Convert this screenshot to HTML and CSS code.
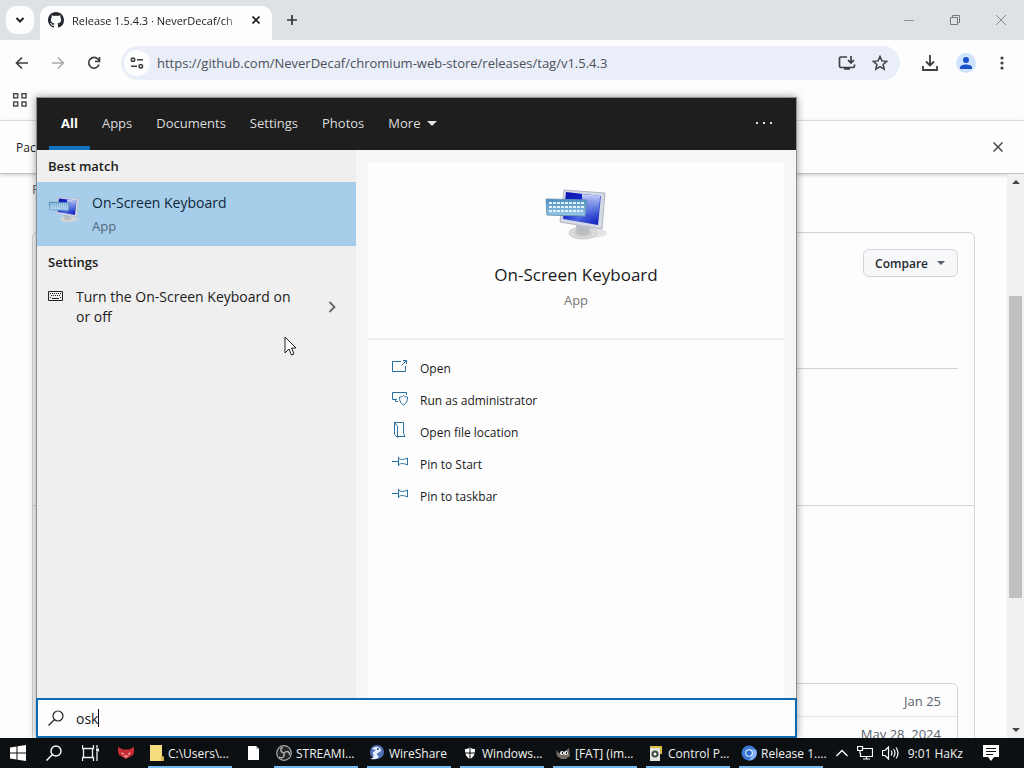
FILE: index.html
```
<!DOCTYPE html>
<html lang="en">
<head>
    <meta charset="UTF-8">
    <meta name="viewport" content="width=device-width, initial-scale=1.0">
    <title>Release 1.5.4.3</title>
    <link rel="stylesheet" href="styles.css">
</head>
<body>
    <svg class="defs" aria-hidden="true">
        <defs>
            <linearGradient id="screenFill" x1="0" y1="0" x2="1" y2="1">
                <stop offset="0" stop-color="#0a14a8"/>
                <stop offset="0.35" stop-color="#1424c8"/>
                <stop offset="0.6" stop-color="#4a66e0"/>
                <stop offset="1" stop-color="#0818b4"/>
            </linearGradient>
            <linearGradient id="glareFill" x1="0" y1="0" x2="0" y2="1">
                <stop offset="0" stop-color="#d4dcfa"/>
                <stop offset="1" stop-color="#4a62dc" stop-opacity="0.2"/>
            </linearGradient>
            <linearGradient id="keysFill" x1="0" y1="0" x2="0" y2="1">
                <stop offset="0" stop-color="#4a8fc0"/>
                <stop offset="1" stop-color="#9cc8e8"/>
            </linearGradient>
            <radialGradient id="standFill">
                <stop offset="0" stop-color="#aeb0b0"/>
                <stop offset="1" stop-color="#e6e6e4"/>
            </radialGradient>
        </defs>
        <symbol id="oskIcon" viewBox="0 0 64 52">
            <ellipse cx="47" cy="44" rx="16" ry="5" fill="#d5d5d5" opacity="0.6"/>
            <ellipse cx="39" cy="44" rx="14" ry="6" fill="url(#standFill)" stroke="#c4c6c8"/>
            <path d="M32 36l14 3-1 6H33z" fill="#b9bdc2"/>
            <path d="M20 1l41 3-3 36-42-7z" fill="#d5d9e4" stroke="#b0b5c4"/>
            <path d="M22 3l35 4-3 29-35-6z" fill="url(#screenFill)"/>
            <path d="M38 5l18 2-2 22-16-6z" fill="url(#glareFill)"/>
            <path d="M2 10l41 1-2 16-38-1z" fill="url(#keysFill)" stroke="#6495b8"/>
            <path d="M5 14h35M5 18h35M5 22h34" stroke="#e2f3fc" stroke-width="2" stroke-dasharray="3 1"/>
        </symbol>
    </svg>

    <div class="browser">
        <header class="tabstrip">
            <button class="tab-search" aria-label="Search tabs">
                <svg width="10" height="8" viewBox="0 0 10 8"><path d="M1.500 2l3.500 3.500L8.500 2" fill="none" stroke="#202124" stroke-width="2"/></svg>
            </button>
            <div class="tab">
                <svg width="16" height="16" viewBox="0 0 16 16"><path fill="#24292f" d="M8 0C3.580 0 0 3.580 0 8c0 3.540 2.290 6.530 5.470 7.590.4.070.55-.17.55-.38 0-.19-.01-.82-.01-1.490-2.010.37-2.530-.49-2.690-.94-.09-.23-.48-.94-.82-1.130-.28-.15-.68-.52-.01-.53.63-.01 1.080.58 1.230.82.72 1.210 1.870.87 2.330.66.070-.52.28-.87.51-1.070-1.780-.2-3.640-.89-3.640-3.950 0-.87.31-1.590.82-2.150-.08-.2-.36-1.020.08-2.120 0 0 .67-.21 2.200.82.64-.18 1.320-.27 2-.27s1.360.09 2 .27c1.530-1.040 2.200-.82 2.200-.82.44 1.100.16 1.920.08 2.120.51.56.82 1.270.82 2.150 0 3.070-1.870 3.750-3.650 3.950.29.25.54.73.54 1.480 0 1.070-.01 1.930-.01 2.200 0 .21.15.46.55.38A8.010 8.010 0 0 0 16 8c0-4.420-3.580-8-8-8z"/></svg>
                <span class="tab-title">Release 1.5.4.3 · NeverDecaf/ch</span>
                <button class="icon-btn" aria-label="Close tab"><svg width="8" height="8" viewBox="0 0 8 8"><path d="M0.500 0.500l7 7M7.500 0.500l-7 7" stroke="#202124" stroke-width="1.700"/></svg></button>
            </div>
            <button class="icon-btn new-tab" aria-label="New tab"><svg width="12" height="12" viewBox="0 0 12 12"><path d="M6 1v10M1 6h10" stroke="#333" stroke-width="1.700"/></svg></button>
            <div class="window-buttons">
                <button class="icon-btn" aria-label="Minimize"><svg width="12" height="12" viewBox="0 0 12 12"><path d="M1 6.500h10" stroke="#8e9093"/></svg></button>
                <button class="icon-btn" aria-label="Restore"><svg width="12" height="12" viewBox="0 0 12 12"><path d="M1.500 3.500h7v7h-7zM3.500 3V1.500h7v7H9" fill="none" stroke="#77797c"/></svg></button>
                <button class="icon-btn" aria-label="Close"><svg width="12" height="12" viewBox="0 0 12 12"><path d="M1 1l10 10M11 1L1 11" stroke="#85878a"/></svg></button>
            </div>
        </header>

        <div class="toolbar">
            <button class="icon-btn" aria-label="Back"><svg width="14" height="14" viewBox="0 0 14 14"><path d="M13 7H2M7 1.500L1.500 7 7 12.500" fill="none" stroke="#3c4043" stroke-width="1.700"/></svg></button>
            <button class="icon-btn" aria-label="Forward"><svg width="14" height="14" viewBox="0 0 14 14"><path d="M1 7h11M7 1.500L12.500 7 7 12.500" fill="none" stroke="#a6a8ab" stroke-width="1.500"/></svg></button>
            <button class="icon-btn" aria-label="Reload"><svg width="14" height="14" viewBox="0 0 14 14"><path d="M12 8.500A5.300 5.300 0 1 1 11 3.300L12.300 5M12.500 1v4.500H8" fill="none" stroke="#3c4043" stroke-width="1.700"/></svg></button>
            <div class="address">
                <button class="site-info" aria-label="Site information">
                    <svg width="14" height="12" viewBox="0 0 14 12" fill="none" stroke="#3c4043" stroke-width="1.600"><circle cx="3" cy="2.700" r="1.700"/><path d="M7 2.700h6M1 9.200h6"/><circle cx="10.800" cy="9.200" r="1.700"/></svg>
                </button>
                <input class="url" type="text" aria-label="Address" value="https://github.com/NeverDecaf/chromium-web-store/releases/tag/v1.5.4.3">
                <button class="icon-btn" aria-label="Install"><svg width="18" height="16" viewBox="0 0 18 16" fill="none" stroke="#3c4043" stroke-width="1.700"><path d="M9 2H3Q1.500 2 1.500 3.500V11Q1.500 12.500 3 12.500H15Q16.500 12.500 16.500 11V9.500M13 1v6M10 5l3 3 3-3M6 14h6"/></svg></button>
                <button class="icon-btn" aria-label="Bookmark"><svg width="16" height="16" viewBox="0 0 16 16"><path d="M8 1.500l1.900 4.400 4.800.4-3.600 3.200 1.100 4.700L8 11.700l-4.200 2.500 1.100-4.700L1.300 6.300l4.800-.4z" fill="none" stroke="#3c4043" stroke-width="1.500"/></svg></button>
            </div>
            <div class="toolbar-end">
                <button class="icon-btn" aria-label="Downloads"><svg width="16" height="16" viewBox="0 0 16 16"><path d="M8 0v10M4 6.500l4 4 4-4M1 11v4h14v-4" fill="none" stroke="#3c4043" stroke-width="1.800"/></svg></button>
                <button class="profile" aria-label="Profile"><svg width="12" height="12" viewBox="0 0 12 12"><path d="M0 12V10.500C0 8.500 3 7.500 6 7.500s6 1 6 3V12z" fill="#1a50c8"/><circle cx="6" cy="3" r="3" fill="#1a50c8"/></svg></button>
                <button class="icon-btn menu-btn" aria-label="Menu"><svg width="4" height="14" viewBox="0 0 4 14" fill="#3c4043"><circle cx="2" cy="2" r="1.600"/><circle cx="2" cy="7" r="1.600"/><circle cx="2" cy="12" r="1.600"/></svg></button>
            </div>
        </div>

        <div class="bookmarks">
            <button class="icon-btn" aria-label="Apps"><svg width="16" height="16" viewBox="0 0 16 16"><path d="M1.700 1.700h4v4h-4zM10 1.700h4v4h-4zM1.700 10h4v4h-4zM10 10h4v4h-4z" fill="none" stroke="#4a4d51" stroke-width="1.500"/></svg></button>
        </div>

        <div class="infobar">
            <span>Pac</span>
            <button class="icon-btn" aria-label="Dismiss"><svg width="10" height="10" viewBox="0 0 10 10"><path d="M0.500 0.500l9 9M9.500 0.500l-9 9" stroke="#46494c" stroke-width="1.500"/></svg></button>
        </div>

        <div class="viewport">
            <main class="page">
                <a class="crumb" href="#">R</a>
                <section class="release">
                    <div class="release-head">
                        <button class="compare">Compare <svg width="8" height="4" viewBox="0 0 8 4"><path d="M0 0h8L4 4z" fill="#59616a"/></svg></button>
                    </div>
                    <div class="release-assets">
                        <ul class="assets">
                            <li>Jan 25</li>
                            <li>May 28, 2024</li>
                        </ul>
                    </div>
                </section>
            </main>
            <div class="scrollbar">
                <svg width="8" height="4" viewBox="0 0 8 4"><path d="M0 4h8L4 0z" fill="#444"/></svg>
                <div class="track"><div class="thumb"></div></div>
                <svg width="8" height="4" viewBox="0 0 8 4"><path d="M0 0h8L4 4z" fill="#444"/></svg>
            </div>
        </div>
    </div>

    <div class="search-panel">
        <nav class="filters">
            <button class="active">All</button>
            <button>Apps</button>
            <button>Documents</button>
            <button>Settings</button>
            <button>Photos</button>
            <button>More <svg width="10" height="5" viewBox="0 0 10 5"><path d="M0 0h10L5 5z" fill="#e4e4e4"/></svg></button>
            <button class="options" aria-label="Options"><svg width="16" height="2" viewBox="0 0 16 2" fill="#e4e4e4"><path d="M0 0h2v2H0zM7 0h2v2H7zM14 0h2v2h-2z"/></svg></button>
        </nav>
        <div class="results">
            <div class="list">
                <h2>Best match</h2>
                <a class="match" href="#">
                    <svg class="match-icon" width="32" height="26"><use href="#oskIcon"/></svg>
                    <span class="match-text">
                        <span class="name">On-Screen Keyboard</span>
                        <span class="kind">App</span>
                    </span>
                </a>
                <h2>Settings</h2>
                <a class="setting" href="#">
                    <svg class="setting-icon" width="16" height="10" viewBox="0 0 16 10"><path d="M0.500 0.500h14v9H0.500z" fill="none" stroke="#222"/><path d="M2 2.500h11M3 4.500h10M2 6.500h2M5 7.500h6M12 6.500h1" stroke="#222" stroke-dasharray="1 1"/><path d="M4 7.500h7" stroke="#222"/></svg>
                    <span class="name">Turn the On-Screen Keyboard on or off</span>
                    <svg width="8" height="12" viewBox="0 0 8 12"><path d="M1.500 1l5 5-5 5" fill="none" stroke="#666" stroke-width="1.800"/></svg>
                </a>
            </div>
            <div class="detail">
                <div class="detail-head">
                    <svg width="64" height="52"><use href="#oskIcon"/></svg>
                    <h1>On-Screen Keyboard</h1>
                    <span class="kind">App</span>
                </div>
                <div class="actions">
                    <button><svg width="16" height="16" viewBox="0 0 16 16"><path d="M9 3.500H0.500v10h13V8M9.500 7.500l5-5M11 2.500h3.500V6"/></svg>Open</button>
                    <button><svg width="16" height="16" viewBox="0 0 16 16"><path d="M5 9.500H0.500v-7h14V5M3.500 9.500v2H6M7.500 7c2 0 3-.5 4-1.500 1 1 2 1.500 4 1.500 0 4-1 6.500-4 8-3-1.500-4-4-4-8z"/></svg>Run as administrator</button>
                    <button><svg width="16" height="16" viewBox="0 0 16 16"><path d="M2.500 0.500v12l3 3v-11zM2.500 0.500h9v11l1.500 3H6"/></svg>Open file location</button>
                    <button><svg width="16" height="16" viewBox="0 0 16 16"><path d="M0 7.500h6.500M6.500 3v9M6.500 4c2 2 5 2 9 0v7c-4-2-7-2-9 0"/></svg>Pin to Start</button>
                    <button><svg width="16" height="16" viewBox="0 0 16 16"><path d="M0 7.500h6.500M6.500 3v9M6.500 4c2 2 5 2 9 0v7c-4-2-7-2-9 0"/></svg>Pin to taskbar</button>
                </div>
            </div>
        </div>
        <label class="search-box">
            <svg width="16" height="16" viewBox="0 0 16 16"><circle cx="10" cy="6" r="5" fill="none" stroke="#222" stroke-width="1.200"/><path d="M6.500 9.500L0.500 15.500" stroke="#222" stroke-width="1.200"/></svg>
            <span class="query">
                <input type="text" aria-label="Search" value="osk">
                <span class="caret"></span>
            </span>
        </label>
    </div>

    <svg class="cursor" width="13" height="20" viewBox="0 0 13 20"><path d="M1 1v16l4-4 2.500 6 2.500-1-2.500-6H12z" fill="#fff" stroke="#222"/></svg>

    <footer class="taskbar">
        <button class="system" aria-label="Start"><svg width="16" height="16" viewBox="0 0 16 16"><path d="M0 2.500l6.500-1v6H0zM7.500 1.300L16 0v7.500H7.500zM0 8.500h6.500v6L0 13.500zM7.500 8.500H16V16l-8.500-1.300z" fill="#fff"/></svg></button>
        <button class="system" aria-label="Search"><svg width="16" height="16" viewBox="0 0 16 16"><circle cx="10" cy="6" r="5" fill="none" stroke="#fff" stroke-width="1.400"/><path d="M6.500 9.500L0.500 15.500" stroke="#fff" stroke-width="1.400"/></svg></button>
        <button class="system" aria-label="Task view"><svg width="17" height="16" viewBox="0 0 17 16"><path d="M0.500 0v3.500h11V0M0.500 16v-3.500h11V16M1.500 3.500v9M10.500 3.500v9M15 0v3M15 7v9" fill="none" stroke="#eee" stroke-width="1.300"/><path d="M14 3.500h3v3h-3z" fill="#eee"/></svg></button>
        <button class="system" aria-label="Fox"><svg width="16" height="12" viewBox="0 0 16 12"><path d="M0 0l5 2.500h6L16 0v5l-1 3-7 4-7-4-1-3z" fill="#c92c33"/><path d="M3 5l3 1.500L5 8zM13 5l-3 1.500L11 8z" fill="#ffc7c7"/><path d="M5 9l3-1 3 1-3 2z" fill="#ef8b85"/></svg></button>
        <div class="tasks">
            <button class="task"><svg width="14" height="16" viewBox="0 0 14 16"><path d="M0 0h12v11l2 1v4H0z" fill="#f6dc7c"/><path d="M11 11l3 1v4h-3z" fill="#d9b64d"/></svg><span>C:\Users\...</span></button>
            <button class="file" aria-label="Document"><svg width="11" height="14" viewBox="0 0 11 14"><path d="M0 0h8l3 3v11H0z" fill="#fff"/><path d="M8 0v3h3" fill="#bbb"/></svg></button>
            <button class="task"><svg width="16" height="16" viewBox="0 0 16 16"><circle cx="8" cy="8" r="7.300" fill="#252325" stroke="#aaa" stroke-width="1.200"/><path d="M8 8C4 7 4 3 7 2.500M8 8c3-3 6-1 5.500 2M8 8c1 4-2 6-5 4" fill="none" stroke="#aaa" stroke-width="1.500"/></svg><span>STREAMI...</span></button>
            <button class="task"><svg width="16" height="16" viewBox="0 0 16 16"><circle cx="8" cy="7" r="7" fill="#506fb4"/><path d="M3 4c3-4 9-2 9 1s-4 2-4 4 3 2 1 4-6 1-8 1c4-1 4-3 3-5s2-3 3-4z" fill="#e4edff"/><circle cx="9" cy="4" r="1" fill="#273966"/></svg><span>WireShare</span></button>
            <button class="task"><svg width="16" height="16" viewBox="0 0 16 16"><path d="M8 2.500C6 4 4.500 4 3 4c0 5 1 8 5 10 4-2 5-5 5-10-1.500 0-3 0-5-1.500z" fill="#fff"/><path d="M8 3v11M3 8h10" stroke="#111"/></svg><span>Windows...</span></button>
            <button class="task"><svg width="16" height="16" viewBox="0 0 16 16"><path d="M1 5l3 3 5-1 5-4 1 8-4 3H6L2 11z" fill="#716b64"/><circle cx="7" cy="8" r="2" fill="#eee"/><circle cx="11" cy="8" r="2" fill="#eee"/><path d="M7 7h1v2H7zM11 7h1v2h-1z" fill="#111"/></svg><span>[FAT] (im...</span></button>
            <button class="task"><svg width="16" height="16" viewBox="0 0 16 16"><path d="M2 1h12v8h-2V4H2z" fill="#d7bd45"/><path d="M2 3h10v13H2z" fill="#e3e5df"/><circle cx="7" cy="9" r="3.500" fill="#3c4a42"/><circle cx="7" cy="9" r="1.500" fill="#fff"/></svg><span>Control P...</span></button>
            <button class="task"><svg width="16" height="16" viewBox="0 0 16 16"><circle cx="8" cy="8" r="7.500" fill="#3d79d4"/><path d="M8 4.500h7A7.500 7.500 0 0 1 8 15.500l3-5z" fill="#82b2f6"/><circle cx="8" cy="8" r="3.800" fill="#e9f2ff"/><circle cx="8" cy="8" r="2.700" fill="#2e6bd0"/></svg><span>Release 1....</span></button>
        </div>
        <div class="tray">
            <svg width="12" height="8" viewBox="0 0 12 8"><path d="M0.500 7L6 1.500 11.500 7" fill="none" stroke="#fff" stroke-width="1.300"/></svg>
            <svg width="16" height="14" viewBox="0 0 16 14"><path d="M6 2.500h9.500v8H3.500V7M0.500 0.500h5v4h-5zM3 4.500v3M9.500 10.500v2M6 13h7" fill="none" stroke="#fff" stroke-width="1.200"/></svg>
            <svg width="17" height="14" viewBox="0 0 17 14"><path d="M0.500 4.500H3l3.500-3.500v12L3 9.500H0.500zM9 4.500q2 2.500 0 5M11.500 3q3 4 0 8M14 1.500q4 5.500 0 11" fill="none" stroke="#fff" stroke-width="1.200"/></svg>
            <span class="clock">9:01 HaKz</span>
            <svg class="notice" width="16" height="16" viewBox="0 0 16 16"><path d="M0 0h16v12h-5l-3 4-3-4H0z" fill="#fff"/><path d="M3 3.500h10M3 6.500h10M3 9.500h7" stroke="#111"/></svg>
        </div>
    </footer>
</body>
</html>
```

FILE: styles.css
```
* {
    box-sizing: border-box;
}
body {
    margin: 0;
    height: 100vh;
    display: flex;
    flex-direction: column;
    overflow: hidden;
    position: relative;
    background: #fdfdfd;
    color: #1b1b1b;
    font-family: "Open Sans", "Noto Sans", sans-serif;
    font-size: 13px;
}
button, input {
    font: inherit;
    color: inherit;
    border: none;
    background: none;
    padding: 0;
    margin: 0;
    outline: none;
}
svg {
    flex: none;
    display: block;
}
a {
    color: inherit;
    text-decoration: none;
}
.defs {
    position: absolute;
    width: 0;
    height: 0;
}
.icon-btn {
    display: flex;
    align-items: center;
    justify-content: center;
    flex: none;
}

/* Browser window */
.browser {
    flex: 1;
    min-height: 0;
    display: flex;
    flex-direction: column;
}
.tabstrip {
    height: 40px;
    display: flex;
    align-items: center;
    padding-left: 6px;
    background: #dde2e4;
}
.tab-search {
    width: 28px;
    height: 28px;
    display: flex;
    align-items: center;
    justify-content: center;
    background: #fdfdfd;
    border-radius: 10px;
}
.tab {
    width: 232px;
    height: 34px;
    margin: 6px 0 0 6px;
    padding: 0 12px 6px 8px;
    display: flex;
    align-items: center;
    gap: 8px;
    background: #fdfdfd;
    border-radius: 10px 10px 0 0;
}
.tab-title {
    flex: 1;
    overflow: hidden;
    white-space: nowrap;
    font-size: 11px;
    mask-image: linear-gradient(to right, #000 88%, transparent 100%);
}
.new-tab {
    margin-left: 14px;
}
.window-buttons {
    margin-left: auto;
    display: flex;
}
.window-buttons .icon-btn {
    width: 46px;
    height: 40px;
}
.toolbar {
    height: 46px;
    display: flex;
    align-items: center;
    padding: 0 20px 0 15px;
    gap: 22px;
    background: #fdfdfd;
}
.toolbar-end {
    display: flex;
    align-items: center;
    gap: 18px;
}
.menu-btn {
    margin-left: 6px;
}
.address {
    flex: 1;
    height: 34px;
    margin-left: -2px;
    padding: 0 12px 0 3px;
    display: flex;
    align-items: center;
    gap: 16px;
    background: #e9eef8;
    border-radius: 17px;
}
.site-info {
    width: 26px;
    height: 26px;
    margin-right: -9px;
    display: flex;
    align-items: center;
    justify-content: center;
    background: #fdfdfd;
    border-radius: 13px;
}
.url {
    flex: 1;
    min-width: 0;
    color: #4b5058;
}
.profile {
    width: 20px;
    height: 20px;
    display: flex;
    align-items: center;
    justify-content: center;
    background: #cfe4fc;
    border-radius: 10px;
}
.bookmarks {
    height: 35px;
    display: flex;
    align-items: center;
    padding: 0 12px 6px;
    border-bottom: 1px solid #e4e5e6;
}
.infobar {
    height: 53px;
    display: flex;
    align-items: center;
    justify-content: space-between;
    padding: 0 21px 0 16px;
    border-bottom: 1px solid #c3c3c3;
    box-shadow: 0 1px 4px #00000033;
    font-size: 12px;
}
.viewport {
    flex: 1;
    min-height: 0;
    display: flex;
}
.page {
    flex: 1;
    padding: 6px 32px 0;
    overflow: hidden;
}
.crumb {
    display: block;
    height: 52px;
    color: #59636e;
}
.release {
    height: 600px;
    border: 1px solid #d1d5da;
    border-radius: 6px;
}
.release-head {
    height: 273px;
    padding: 16px 16px 0;
    display: flex;
    flex-direction: column;
    align-items: flex-end;
    border-bottom: 1px solid #d1d5da;
}
.release-head::after {
    content: "";
    width: 100%;
    margin-top: 91px;
    border-top: 1px solid #d1d5da;
}
.compare {
    height: 28px;
    padding: 0 12px 0 11px;
    display: flex;
    align-items: center;
    gap: 9px;
    background: #f6f8fa;
    border: 1px solid #d1d5da;
    border-radius: 6px;
    color: #25292e;
    font-size: 12px;
    font-weight: 600;
}
.release-assets {
    padding: 177px 16px 0;
}
.assets {
    list-style: none;
    margin: 0;
    padding: 0;
    border: 1px solid #d1d5da;
    border-radius: 6px;
    color: #59636e;
    text-align: right;
}
.assets li {
    height: 33px;
    padding: 0 16px;
    line-height: 34px;
    border-bottom: 1px solid #e1e3e6;
}
.scrollbar {
    width: 17px;
    padding: 6px 0;
    display: flex;
    flex-direction: column;
    align-items: center;
    background: #f1f1f1;
}
.track {
    flex: 1;
    padding-top: 20%;
    display: flex;
    flex-direction: column;
    width: 13px;
}
.track::before {
    content: "";
    flex: 20;
}
.track::after {
    content: "";
    flex: 24;
}
.thumb {
    flex: 56;
    background: #c1c1c1;
}

/* Windows search panel */
.search-panel {
    position: absolute;
    left: 36px;
    top: 97px;
    bottom: 30px;
    width: 761px;
    display: flex;
    flex-direction: column;
    background: #f6f6f6;
    border: 1px solid #8b8d8f;
    border-bottom: none;
    box-shadow: 0 0 8px #00000066;
}
.filters {
    height: 52px;
    display: flex;
    padding-left: 12px;
    background: #1e1e1e;
    color: #dcdcdc;
}
.filters button {
    padding: 0 12px 2px;
    display: flex;
    align-items: center;
    gap: 7px;
    border-top: 4px solid transparent;
    border-bottom: 4px solid transparent;
}
.filters .active {
    color: #fff;
    font-weight: 700;
    border-bottom-color: #1272c0;
}
.filters .options {
    margin-left: auto;
    padding: 0 24px 2px;
}
.results {
    flex: 1;
    min-height: 0;
    display: flex;
}
.list {
    width: 319px;
    background: #efefef;
}
.list h2 {
    margin: 0;
    padding-left: 11px;
    line-height: 32px;
    font-size: 13px;
    font-weight: 600;
}
.match {
    height: 64px;
    padding: 9px 11px;
    display: flex;
    gap: 12px;
    background: #a6cde9;
    color: #10253a;
}
.match-icon {
    margin-top: 6px;
}
.match-text {
    display: flex;
    flex-direction: column;
}
.match .name {
    line-height: 24px;
}
.match .kind {
    color: #50687d;
    line-height: 22px;
}
.name {
    font-size: 14px;
}
.setting {
    padding: 9px 20px 8px 11px;
    display: flex;
    align-items: center;
    gap: 12px;
}
.setting .name {
    flex: 1;
    line-height: 20px;
    padding-right: 20px;
}
.setting-icon {
    align-self: flex-start;
    margin-top: 4px;
}
.detail {
    flex: 1;
    margin: 12px 12px 0;
    background: #fdfdfd;
}
.detail-head {
    height: 178px;
    padding-top: 27px;
    display: flex;
    flex-direction: column;
    align-items: center;
    border-bottom: 2px solid #f0f0f0;
}
.detail-head h1 {
    margin: 20px 0 0;
    font-size: 17px;
    line-height: 28px;
    font-weight: 400;
}
.detail-head .kind {
    color: #777;
    line-height: 22px;
}
.actions {
    padding: 12px 24px;
    font-size: 12px;
}
.actions button {
    height: 32px;
    display: flex;
    align-items: center;
    gap: 12px;
}
.actions svg {
    margin-bottom: 4px;
    fill: none;
    stroke: #28709f;
}
.search-box {
    height: 40px;
    margin: 0 -1px;
    padding: 0 10px;
    display: flex;
    align-items: center;
    gap: 12px;
    background: #fdfdfd;
    border: 2px solid #106ab0;
}
.query {
    display: flex;
    align-items: center;
}
.search-box input {
    field-sizing: content;
    font-size: 14px;
}
.caret {
    width: 1px;
    height: 18px;
    background: #111;
}
.cursor {
    position: absolute;
    left: 284px;
    top: 336px;
}

/* Taskbar */
.taskbar {
    height: 30px;
    display: flex;
    align-items: center;
    background: #0c1012;
    color: #f2f2f2;
    font-size: 12px;
}
.taskbar button {
    height: 30px;
    display: flex;
    align-items: center;
}
.system {
    width: 36px;
    justify-content: center;
}
.tasks {
    display: flex;
    gap: 9px;
    margin-left: 4px;
}
.taskbar .task {
    width: 84px;
    padding: 0 0 0 2px;
    gap: 4px;
    border-top: 2px solid transparent;
    border-bottom: 2px solid #76b9ed;
    white-space: nowrap;
}
.file {
    width: 24px;
    justify-content: center;
}
.tray {
    margin-left: auto;
    padding-right: 25px;
    display: flex;
    align-items: center;
    gap: 9px;
    white-space: nowrap;
}
.clock {
    padding-right: 11px;
}
```
